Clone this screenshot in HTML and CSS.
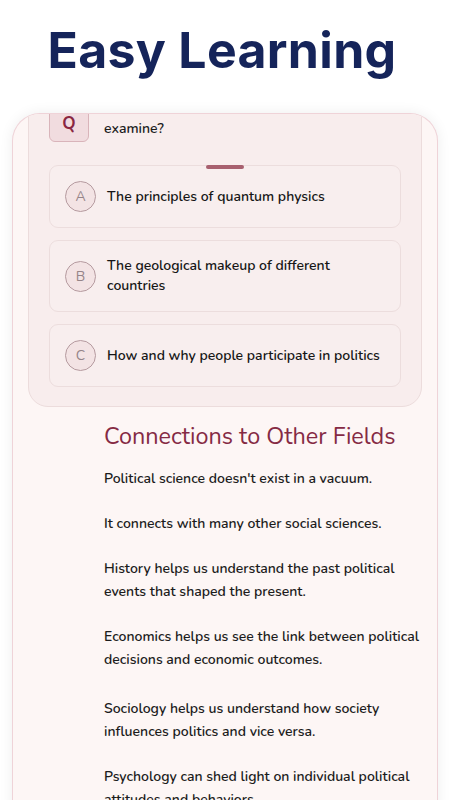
FILE: index.html
```html
<!DOCTYPE html>
<html lang="en">
<head>
<meta charset="utf-8">
<title>Easy Learning</title>
<link rel="stylesheet" href="styles.css">
</head>
<body>
<header class="hero">
  <h1 class="hero-title">Easy Learning</h1>
</header>
<main class="phone">
  <section class="quiz-card">
    <div class="question">
      <div class="q-badge">Q</div>
      <p class="q-text">What does political science primarily examine?</p>
    </div>
    <div class="options">
      <div class="option">
        <span class="drag-handle"></span>
        <span class="opt-letter">A</span>
        <span class="opt-text">The principles of quantum physics</span>
      </div>
      <div class="option">
        <span class="opt-letter">B</span>
        <span class="opt-text">The geological makeup of different countries</span>
      </div>
      <div class="option">
        <span class="opt-letter">C</span>
        <span class="opt-text">How and why people participate in politics</span>
      </div>
    </div>
  </section>
  <section class="lesson">
    <h2 class="lesson-title">Connections to Other Fields</h2>
    <p>Political science doesn't exist in a vacuum.</p>
    <p>It connects with many other social sciences.</p>
    <p>History helps us understand the past political events that shaped the present.</p>
    <p>Economics helps us see the link between political decisions and economic outcomes.</p>
    <p class="gap-more">Sociology helps us understand how society influences politics and vice versa.</p>
    <p>Psychology can shed light on individual political attitudes and behaviors.</p>
  </section>
</main>
</body>
</html>
```
FILE: styles.css
```css
* { box-sizing: border-box; }
html, body { margin: 0; padding: 0; background: #ffffff; }
body {
  width: 450px;
  height: 800px;
  overflow: hidden;
  font-family: "Nunito", "Lato", "Open Sans", sans-serif;
}
.hero {
  height: 113px;
  display: flex;
  justify-content: center;
  padding: 20px 6px 0 0;
}
.hero-title {
  margin: 0;
  font-family: "Inter", sans-serif;
  font-weight: 700;
  font-size: 50px;
  line-height: 60px;
  color: #15245a;
  letter-spacing: 0.3px;
}
.phone {
  margin: 0 12px;
  height: 700px;
  background: #fdf6f5;
  border: 1px solid #efd3d8;
  border-bottom: none;
  border-radius: 28px 28px 0 0;
  box-shadow: 0 0 14px rgba(0, 0, 0, 0.07);
  overflow: hidden;
  padding: 0 15px;
}
.quiz-card {
  margin-top: -36px;
  background: #f8eded;
  border: 1px solid #ecdcdc;
  border-radius: 20px;
  padding: 17px 20px 19px;
}
.question {
  display: flex;
  align-items: flex-end;
  gap: 15px;
}
.q-badge {
  flex: none;
  width: 40px;
  height: 38px;
  background: #f1dcdf;
  border: 1px solid #d9b4ba;
  border-radius: 6px;
  display: flex;
  align-items: center;
  justify-content: center;
  color: #8a2742;
  font-weight: 700;
  font-size: 17px;
}
.q-text {
  margin: 0 0 2px;
  font-size: 14px;
  line-height: 22px;
  font-weight: 600;
  color: #1d1d1d;
  max-width: 290px;
}
.options {
  margin-top: 23px;
  display: flex;
  flex-direction: column;
  gap: 12px;
}
.option {
  position: relative;
  display: flex;
  align-items: center;
  gap: 11px;
  background: #f8eeee;
  border: 1px solid #ecdddd;
  border-radius: 9px;
  padding: 15px 18px 15px 15px;
  min-height: 63px;
}
.drag-handle {
  position: absolute;
  top: -1px;
  left: 50%;
  width: 38px;
  height: 4px;
  margin-left: -19px;
  border-radius: 2px;
  background: #a8606f;
}
.opt-letter {
  flex: none;
  width: 31px;
  height: 31px;
  border-radius: 50%;
  border: 1px solid #b59a9f;
  background: #f3e3e4;
  color: #958488;
  font-size: 14px;
  display: flex;
  align-items: center;
  justify-content: center;
}
.opt-text {
  font-size: 14px;
  line-height: 20px;
  font-weight: 600;
  color: #161616;
}
.lesson {
  margin-left: 76px;
  padding-top: 14px;
}
.lesson-title {
  margin: 0 0 16px;
  font-size: 23.4px;
  line-height: 30px;
  font-weight: 400;
  color: #852a44;
}
.lesson p {
  margin: 0 0 22px;
  font-size: 14px;
  line-height: 23px;
  font-weight: 600;
  color: #1c1c1c;
}
.lesson p.gap-more { margin-top: 26px; }
```
